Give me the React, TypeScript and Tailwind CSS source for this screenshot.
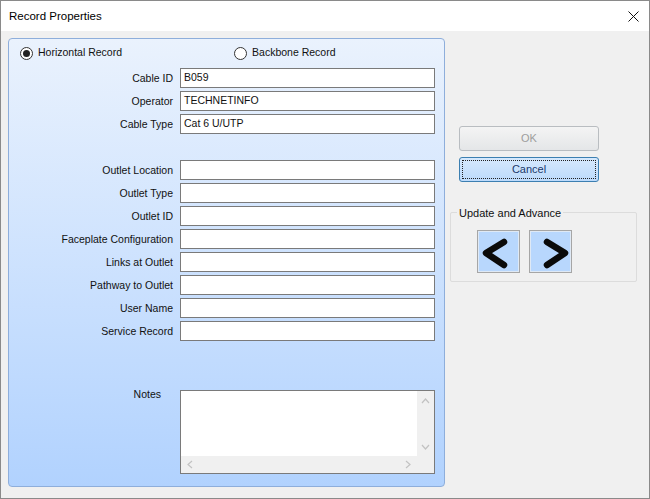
import React, { useState } from 'react';

// Labels shown above the notes box, in the order of the form
const upperFields: [string, string][] = [
  ['Cable ID', 'B059'],
  ['Operator', 'TECHNETINFO'],
  ['Cable Type', 'Cat 6 U/UTP'],
];

const outletFields = [
  'Outlet Location',
  'Outlet Type',
  'Outlet ID',
  'Faceplate Configuration',
  'Links at Outlet',
  'Pathway to Outlet',
  'User Name',
  'Service Record',
];

const FieldRow: React.FC<{ label: string; value?: string }> = ({ label, value }) => (
  <div className="flex items-center">
    <span className="w-[164px] text-right pt-[1px]">{label}</span>
    <div className="ml-[7px] w-[255px] h-[20px] bg-white border border-[#7a7a7a] pl-[3px] flex items-center">
      {value}
    </div>
  </div>
);

const Radio: React.FC<{ checked: boolean; label: string; onClick: () => void }> = ({
  checked,
  label,
  onClick,
}) => (
  <div className="flex items-center cursor-default" onClick={onClick}>
    <span className="w-[13px] h-[13px] rounded-full border border-[#333] bg-white flex items-center justify-center">
      {checked && <span className="w-[7px] h-[7px] rounded-full bg-[#222]" />}
    </span>
    <span className="ml-[5px]">{label}</span>
  </div>
);

const Chevron: React.FC<{ dir: 'left' | 'right' }> = ({ dir }) => (
  <svg width="43" height="43" viewBox="0 0 43 43" className="block">
    <polyline
      points={dir === 'left' ? '26,11 8,22 26,34' : '17,11 35,22 17,34'}
      fill="none"
      stroke="#0a0a0a"
      strokeWidth="6.5"
      strokeLinecap="round"
      strokeLinejoin="round"
    />
  </svg>
);

const App: React.FC = () => {
  const [horizontal, setHorizontal] = useState(true);

  return (
    <div className="w-[650px] h-[499px] border border-[#8a8a8a] bg-[#f0f0f0] flex flex-col font-['Liberation_Sans',Arial,sans-serif] text-[10.5px] text-[#111] overflow-hidden">
      {/* Title bar */}
      <div className="h-[30px] bg-white flex items-center justify-between pl-[8px] pr-[10px] pt-[1px] shrink-0">
        <span className="text-[11.5px] text-black">Record Properties</span>
        <svg width="11" height="11" viewBox="0 0 11 11">
          <path d="M0.5 0.5 L10.5 10.5 M10.5 0.5 L0.5 10.5" stroke="#111" strokeWidth="1" />
        </svg>
      </div>

      <div className="flex items-start">
        {/* Record panel */}
        <div className="ml-[7px] mt-[7px] w-[437px] h-[449px] rounded-[4px] border border-[#8eaedb] bg-gradient-to-b from-[#eaf2fd] to-[#b1d2fe] flex flex-col">
          <div className="flex items-center h-[16px] mt-[6px] pl-[11px]">
            <Radio checked={horizontal} label="Horizontal Record" onClick={() => setHorizontal(true)} />
            <div className="ml-[112px]">
              <Radio checked={!horizontal} label="Backbone Record" onClick={() => setHorizontal(false)} />
            </div>
          </div>

          <div className="mt-[7px] flex flex-col gap-[3px]">
            {upperFields.map(([label, value]) => (
              <FieldRow key={label} label={label} value={value} />
            ))}
          </div>

          <div className="mt-[26px] flex flex-col gap-[3px]">
            {outletFields.map((label) => (
              <FieldRow key={label} label={label} />
            ))}
          </div>

          {/* Notes */}
          <div className="mt-[49px] flex items-start">
            <span className="w-[152px] text-right -mt-[3px]">Notes</span>
            <div className="ml-[19px] w-[255px] h-[84px] bg-white border border-[#7a7a7a] flex">
              <div className="flex-1 flex flex-col">
                <div className="flex-1" />
                <div className="h-[17px] bg-[#f0f0f0] flex items-center justify-between px-[6px]">
                  <svg width="6" height="9" viewBox="0 0 6 9">
                    <polyline points="5,1 1,4.5 5,8" fill="none" stroke="#c2c2c2" strokeWidth="1.2" />
                  </svg>
                  <svg width="6" height="9" viewBox="0 0 6 9">
                    <polyline points="1,1 5,4.5 1,8" fill="none" stroke="#c2c2c2" strokeWidth="1.2" />
                  </svg>
                </div>
              </div>
              <div className="w-[17px] bg-[#f0f0f0] flex flex-col items-center pt-[7px]">
                <svg width="9" height="6" viewBox="0 0 9 6">
                  <polyline points="1,5 4.5,1 8,5" fill="none" stroke="#c2c2c2" strokeWidth="1.2" />
                </svg>
                <div className="h-[40px]" />
                <svg width="9" height="6" viewBox="0 0 9 6">
                  <polyline points="1,1 4.5,5 8,1" fill="none" stroke="#c2c2c2" strokeWidth="1.2" />
                </svg>
              </div>
            </div>
          </div>
        </div>

        {/* Right column */}
        <div className="ml-[5px] mt-[95px] w-[187px] flex flex-col">
          <button
            disabled
            className="ml-[9px] w-[140px] h-[25px] rounded-[3px] border border-[#b9bdc1] bg-gradient-to-b from-[#f4f4f4] to-[#e4e6e8] text-[#9d9d9d] text-[11px]"
          >
            OK
          </button>
          <button className="ml-[9px] mt-[6px] w-[140px] h-[25px] rounded-[3px] border border-[#3c7fb1] bg-gradient-to-b from-[#d6e9fd] to-[#bcdafb] p-[2px]">
            <span className="block w-full h-full border border-dotted border-[#222] leading-[17px] text-[#1c3a6b] text-[11px]">
              Cancel
            </span>
          </button>

          <div className="mt-[30px] relative h-[70px] rounded-[2px] border border-[#dcdcdc]">
            <span className="absolute -top-[8px] left-[6px] bg-[#f0f0f0] px-[2px] text-[11px]">
              Update and Advance
            </span>
            <div className="mt-[17px] ml-[26px] flex gap-[9px]">
              <button className="w-[43px] h-[43px] border border-[#a6a6a6] bg-[#b8d7fd] shadow-[inset_0_0_0_1px_#dfe9f5]">
                <Chevron dir="left" />
              </button>
              <button className="w-[43px] h-[43px] border border-[#a6a6a6] bg-[#b8d7fd] shadow-[inset_0_0_0_1px_#dfe9f5]">
                <Chevron dir="right" />
              </button>
            </div>
          </div>
        </div>
      </div>
    </div>
  );
};

export default App;
